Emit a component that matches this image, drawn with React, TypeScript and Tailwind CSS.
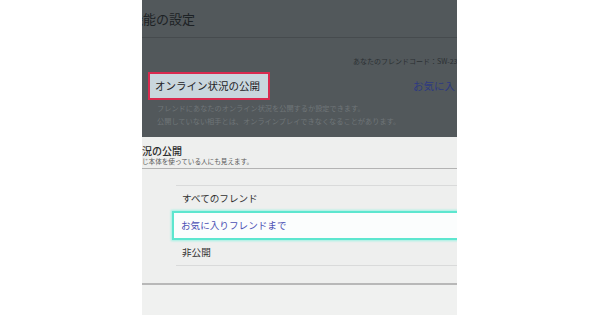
export default function App() {
  const font = { fontFamily: '"Noto Sans CJK JP", "Noto Sans", sans-serif' };
  return (
    <main className="flex h-[315px] w-[600px] bg-white" style={font}>
      <div className="w-[142px] shrink-0 bg-white" />

      <section className="flex w-[315px] shrink-0 flex-col overflow-hidden">
        {/* dimmed settings page behind the popup */}
        <div className="h-[137px] shrink-0 overflow-hidden bg-[#52585b]">
          <div className="flex h-[38px] items-center border-b border-[#464b4e]">
            <h1 className="ml-[-12px] whitespace-nowrap text-[13px] leading-none text-[#1d2225]">機能の設定</h1>
          </div>
          <p className="ml-[211px] mt-[19px] whitespace-nowrap text-[7px] leading-[9px] text-[#2b3033]">
            あなたのフレンドコード：SW-2345-6789-0123
          </p>
          <div className="mt-[6px] flex items-center whitespace-nowrap">
            <div className="ml-[6px] flex h-[28px] w-[122px] shrink-0 items-center border-2 border-[#d92a4f] bg-[#c9d6dd] pl-[5px] text-[10.5px] text-[#1e2326]">
              オンライン状況の公開
            </div>
            <span className="ml-[143px] text-[10.5px] text-[#2e3a80]">お気に入りフレンドまで</span>
          </div>
          <div className="ml-[15px] mt-[2px] whitespace-nowrap text-[7.2px] leading-[13px] text-[#6f7578]">
            <p>フレンドにあなたのオンライン状況を公開するか設定できます。</p>
            <p>公開していない相手とは、オンラインプレイできなくなることがあります。</p>
          </div>
        </div>

        {/* popup */}
        <div className="flex flex-1 flex-col bg-[#eeefee]">
          <div className="border-b border-[#b3b3b3] pb-[2px] pt-[8px]">
            <h2 className="whitespace-nowrap text-[10px] font-medium leading-[11px] text-[#2a2a2a]">況の公開</h2>
            <p className="mt-[1px] whitespace-nowrap text-[6.6px] leading-[9px] text-[#5a5a5a]">じ本体を使っている人にも見えます。</p>
          </div>

          <ul className="ml-[34px] mt-[16px] border-y border-[#d9dada] text-[9.6px] text-[#303030]">
            <li className="flex h-[25px] items-center pl-[6px]">すべてのフレンド</li>
            <li className="-ml-[4px] -mr-[8px] flex h-[29px] items-center border-2 border-[#5de6cf] bg-[#fbfdfd] pl-[7px] text-[#4b50b4] shadow-[0_0_2px_1px_#9ff2e4]">
              お気に入りフレンドまで
            </li>
            <li className="flex h-[25px] items-center pl-[6px]">非公開</li>
          </ul>

          <div className="mt-[17px] border-t-2 border-[#b8b8b8]" />
          <div className="flex-1 bg-[#f0f1f0]" />
        </div>
      </section>

      <div className="flex-1 bg-white" />
    </main>
  );
}
